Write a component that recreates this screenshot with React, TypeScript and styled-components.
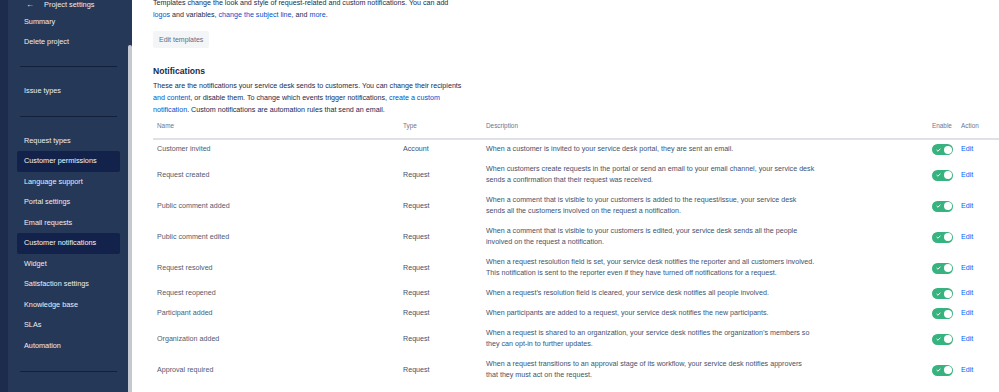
import React from "react";
import styled, { createGlobalStyle } from "styled-components";

const Global = createGlobalStyle`
  html, body { margin: 0; padding: 0; background: #ffffff; }
  body { font-family: "Liberation Sans", Arial, sans-serif; overflow: hidden; }
  #root { width: 999px; height: 392px; }
`;

const Page = styled.div`
  display: flex;
  width: 999px;
  height: 392px;
  overflow: hidden;
`;

const Rail = styled.div`
  width: 8px;
  flex: none;
  background: #1d2c4c;
`;

const Sidebar = styled.nav`
  width: 120px;
  flex: none;
  background: #253858;
  display: flex;
  flex-direction: column;
  color: #eceef2;
  font-size: 7.3px;
`;

const SideHeader = styled.div`
  height: 18px;
  flex: none;
  display: flex;
  align-items: flex-start;
  padding-left: 18px;
  position: relative;
  z-index: 1;
  background: #253858;
  line-height: 9px;
  font-size: 7.4px;
`;

const Back = styled.span`
  width: 18px;
  flex: none;
  font-size: 8px;
`;

const SideList = styled.div`
  flex: 1;
  display: flex;
  flex-direction: column;
  padding: 0 8px 0 9px;
  margin-top: -6.5px;
`;

const SideItem = styled.div<{ $active?: boolean }>`
  height: 20.5px;
  line-height: 20.5px;
  padding-left: 7px;
  border-radius: 2px;
  white-space: nowrap;
  background: ${(p) => (p.$active ? "#12224a" : "transparent")};
  color: ${(p) => (p.$active ? "#f4f5f8" : "#eceef2")};
`;

const SideDivider = styled.div<{ $top: number; $bottom: number }>`
  height: 1px;
  flex: none;
  background: #13203b;
  margin: ${(p) => p.$top}px 3px ${(p) => p.$bottom}px;
`;

const ScrollTrack = styled.div`
  width: 4px;
  flex: none;
  background: #253858;
  display: flex;
  flex-direction: column;
`;

const ScrollThumb = styled.div`
  margin-top: 45px;
  flex: 1;
  background: #c4c9d1;
  border-radius: 2px 2px 0 0;
`;

const Main = styled.main`
  flex: 1;
  padding: 0 0 0 21px;
  color: #172b4d;
  font-size: 7.15px;
  min-width: 0;
`;

const Para = styled.p<{ $lh: number }>`
  margin: 0;
  line-height: ${(p) => p.$lh}px;
  color: #172b4d;
  white-space: nowrap;
`;

const Link = styled.a`
  color: #0052cc;
  text-decoration: none;
`;

const Button = styled.button`
  margin-top: 10px;
  height: 17px;
  padding: 0 6px;
  border: none;
  border-radius: 2px;
  background: #f4f5f7;
  color: #5e6c84;
  font: inherit;
  font-size: 7px;
`;

const Heading = styled.h2`
  margin: 17px 0 2.5px;
  font-size: 8.6px;
  line-height: 12px;
  font-weight: 700;
  color: #172b4d;
`;

const Table = styled.div`
  margin-top: 3px;
  display: flex;
  flex-direction: column;
`;

const cols = "246px 83px 446px 29px 60px";

const HeadRow = styled.div`
  display: grid;
  grid-template-columns: ${cols};
  height: 19px;
  box-sizing: content-box;
  align-items: start;
  padding-top: 0;
  line-height: 14px;
  border-bottom: 2px solid #dfe1e6;
  color: #6b778c;
  font-size: 6.4px;
`;

const HeadCell = styled.div`
  padding-left: 4px;
`;

const Row = styled.div`
  display: grid;
  grid-template-columns: ${cols};
  align-items: center;
  padding: 4.5px 0;
  line-height: 11px;
  color: #42526e;
`;

const Cell = styled.div`
  padding-left: 4px;
  white-space: nowrap;
`;

const NameCell = styled(Cell)`
  color: #4f5b70;
`;

const EditLink = styled.a`
  padding-left: 4px;
  color: #0065ff;
  text-decoration: none;
`;

const ToggleTrack = styled.span`
  margin-left: 4px;
  width: 21px;
  height: 11px;
  border-radius: 6px;
  background: #36b37e;
  display: flex;
  align-items: center;
  justify-content: space-between;
  padding: 0 1.5px 0 4px;
  box-sizing: border-box;
`;

const Knob = styled.span`
  width: 8px;
  height: 8px;
  border-radius: 50%;
  background: #ffffff;
`;

const Toggle = () => (
  <ToggleTrack>
    <svg width="5" height="4" viewBox="0 0 5 4">
      <path d="M0.6 2 L1.9 3.2 L4.4 0.8" stroke="#fff" strokeWidth="1" fill="none" />
    </svg>
    <Knob />
  </ToggleTrack>
);

type Note = { name: string; type: string; desc: string[] };

const notes: Note[] = [
  { name: "Customer invited", type: "Account", desc: ["When a customer is invited to your service desk portal, they are sent an email."] },
  {
    name: "Request created",
    type: "Request",
    desc: [
      "When customers create requests in the portal or send an email to your email channel, your service desk",
      "sends a confirmation that their request was received.",
    ],
  },
  {
    name: "Public comment added",
    type: "Request",
    desc: [
      "When a comment that is visible to your customers is added to the request/issue, your service desk",
      "sends all the customers involved on the request a notification.",
    ],
  },
  {
    name: "Public comment edited",
    type: "Request",
    desc: [
      "When a comment that is visible to your customers is edited, your service desk sends all the people",
      "involved on the request a notification.",
    ],
  },
  {
    name: "Request resolved",
    type: "Request",
    desc: [
      "When a request resolution field is set, your service desk notifies the reporter and all customers involved.",
      "This notification is sent to the reporter even if they have turned off notifications for a request.",
    ],
  },
  { name: "Request reopened", type: "Request", desc: ["When a request\u2019s resolution field is cleared, your service desk notifies all people involved."] },
  { name: "Participant added", type: "Request", desc: ["When participants are added to a request, your service desk notifies the new participants."] },
  {
    name: "Organization added",
    type: "Request",
    desc: [
      "When a request is shared to an organization, your service desk notifies the organization\u2019s members so",
      "they can opt-in to further updates.",
    ],
  },
  {
    name: "Approval required",
    type: "Request",
    desc: [
      "When a request transitions to an approval stage of its workflow, your service desk notifies approvers",
      "that they must act on the request.",
    ],
  },
];

const groupB = [
  "Customer permissions",
  "Language support",
  "Portal settings",
  "Email requests",
  "Customer notifications",
  "Widget",
  "Satisfaction settings",
  "Knowledge base",
  "SLAs",
  "Automation",
];
const active = new Set(["Customer permissions", "Customer notifications"]);

export default function App() {
  return (
    <>
      <Global />
      <Page>
        <Rail />
        <Sidebar>
          <SideHeader>
            <Back>←</Back>
            <span>Project settings</span>
          </SideHeader>
          <SideList>
            <SideItem>Summary</SideItem>
            <SideItem>Delete project</SideItem>
            <SideDivider $top={13} $bottom={14} />
            <SideItem>Issue types</SideItem>
            <SideDivider $top={14.5} $bottom={14} />
            <SideItem>Request types</SideItem>
            {groupB.map((t) => (
              <SideItem key={t} $active={active.has(t)}>
                {t}
              </SideItem>
            ))}
            <SideDivider $top={14.5} $bottom={0} />
          </SideList>
        </Sidebar>
        <ScrollTrack>
          <ScrollThumb />
        </ScrollTrack>
        <Main>
          <Para $lh={11.6} style={{ marginTop: -2 }}>
            Templates change the look and style of request-related and custom notifications. You can add
            <br />
            <Link>logos</Link> and variables, <Link>change the subject line</Link>, and <Link>more</Link>.
          </Para>
          <Button>Edit templates</Button>
          <Heading>Notifications</Heading>
          <Para $lh={12}>
            These are the notifications your service desk sends to customers. You can change their recipients
            <br />
            <Link>and content</Link>, or disable them. To change which events trigger notifications,{" "}
            <Link>create a custom</Link>
            <br />
            <Link>notification</Link>. Custom notifications are automation rules that send an email.
          </Para>
          <Table>
            <HeadRow>
              <HeadCell>Name</HeadCell>
              <HeadCell>Type</HeadCell>
              <HeadCell>Description</HeadCell>
              <HeadCell>Enable</HeadCell>
              <HeadCell>Action</HeadCell>
            </HeadRow>
            {notes.map((n) => (
              <Row key={n.name}>
                <NameCell>{n.name}</NameCell>
                <Cell>{n.type}</Cell>
                <Cell>
                  {n.desc.map((l, i) => (
                    <div key={i}>{l}</div>
                  ))}
                </Cell>
                <Toggle />
                <EditLink>Edit</EditLink>
              </Row>
            ))}
          </Table>
        </Main>
      </Page>
    </>
  );
}
